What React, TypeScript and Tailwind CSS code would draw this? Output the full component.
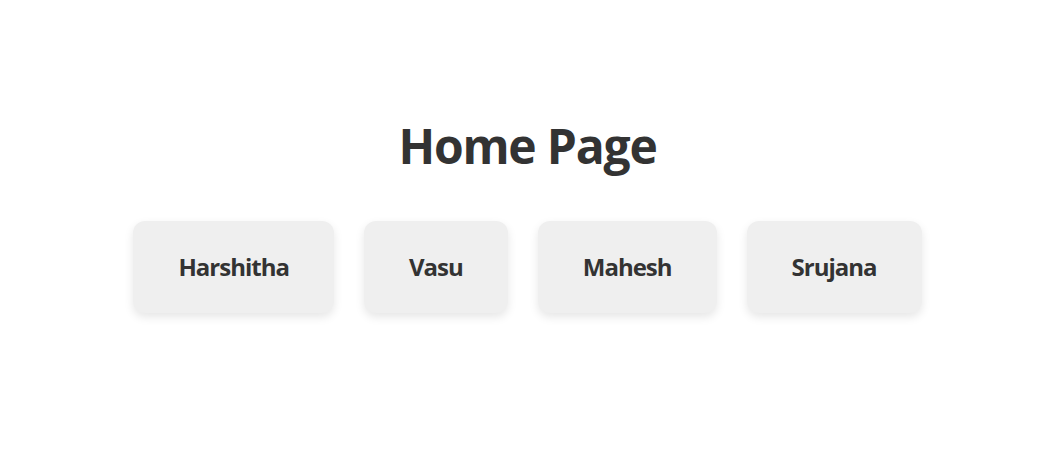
import React from "react";

const names = ["Harshitha", "Vasu", "Mahesh", "Srujana"];

export default function App() {
    return (
        <div className="min-h-screen bg-white font-['Open_Sans',sans-serif] text-[#333333]">
            <main className="flex flex-col items-center pt-[114px] pl-[3px]">
                {/* Page title */}
                <h1 className="text-[48px] leading-[64px] font-bold tracking-[-1.2px] mb-[43px]">Home Page</h1>

                {/* Name cards */}
                <div className="flex gap-[30px]">
                    {names.map((name) => (
                        <div
                            key={name}
                            className="bg-[#efefef] rounded-xl px-[45px] py-[30px] text-[24px] leading-[32px] font-bold tracking-[-1px] shadow-[0_4px_10px_rgba(0,0,0,0.1)]">
                            {name}
                        </div>
                    ))}
                </div>
            </main>
        </div>
    );
}
